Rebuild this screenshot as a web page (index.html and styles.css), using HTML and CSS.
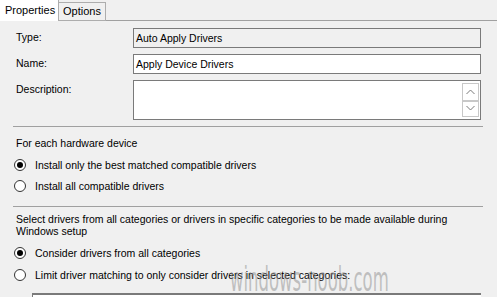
FILE: index.html
```html
<!DOCTYPE html>
<html>
<head>
<meta charset="utf-8">
<link rel="stylesheet" href="styles.css">
</head>
<body>
<div class="dialog">
  <div class="tabbar">
    <div class="tab active">Properties</div>
    <div class="tab">Options</div>
    <div class="tab-fill"></div>
  </div>
  <div class="panel">
    <div class="form">
      <div class="label">Type:</div>
      <div class="field readonly">Auto Apply Drivers</div>
      <div class="label">Name:</div>
      <div class="field">Apply Device Drivers</div>
      <div class="label">Description:</div>
      <div class="textarea">
        <div class="textarea-body"></div>
        <div class="spin">
          <div class="spin-btn">
            <svg width="9" height="6" viewBox="0 0 9 6"><path d="M0.5 5 L4.5 1 L8.5 5" fill="none" stroke="#7a7a7a" stroke-width="1"/></svg>
          </div>
          <div class="spin-btn">
            <svg width="9" height="6" viewBox="0 0 9 6"><path d="M0.5 1 L4.5 5 L8.5 1" fill="none" stroke="#7a7a7a" stroke-width="1"/></svg>
          </div>
        </div>
      </div>
    </div>
    <div class="sep"></div>
    <div class="section s1">
      <div class="caption">For each hardware device</div>
      <div class="radio-row first"><span class="radio checked"></span><span>Install only the best matched compatible drivers</span></div>
      <div class="radio-row second"><span class="radio"></span><span>Install all compatible drivers</span></div>
    </div>
    <div class="sep sep2"></div>
    <div class="section s2">
      <div class="caption multi">Select drivers from all categories or drivers in specific categories to be made available during Windows setup</div>
      <div class="radio-row first2"><span class="radio checked"></span><span>Consider drivers from all categories</span></div>
      <div class="radio-row second2"><span class="radio"></span><span>Limit driver matching to only consider drivers in selected categories:</span></div>
      <div class="listbox"></div>
    </div>
  </div>
  <div class="watermark">windows-noob.com</div>
</div>
</body>
</html>
```

FILE: styles.css
```css
html, body {
  margin: 0;
  padding: 0;
}
body {
  width: 497px;
  height: 297px;
  overflow: hidden;
  background: #f0f0f0;
  font-family: "Liberation Sans", Arial, sans-serif;
  font-size: 10.5px;
  color: #000;
}
.dialog {
  position: relative;
  width: 497px;
  height: 297px;
  overflow: hidden;
}
.tabbar {
  display: flex;
  height: 21px;
}
.tab {
  box-sizing: border-box;
  height: 19px;
  margin-top: 2px;
  padding: 0 4px;
  line-height: 17px;
  font-size: 11px;
  background: #f0f0f0;
  border: 1px solid #adadad;
  border-left: none;
}
.tab.active {
  height: 21px;
  margin-top: 0;
  width: 59px;
  padding: 0 0 0 5px;
  line-height: 20px;
  background: #fff;
  border: none;
  border-right: 1px solid #adadad;
}
.tab-fill {
  flex: 1;
  border-bottom: 1px solid #a0a0a0;
  height: 20px;
}
.panel {
  padding: 7px 16px 0 16px;
}
.form {
  display: grid;
  grid-template-columns: 117px 1fr;
  row-gap: 6px;
}
.label {
  line-height: 14px;
  padding-top: 2px;
}
.field {
  box-sizing: border-box;
  height: 20px;
  border: 1px solid #7a7a7a;
  background: #fff;
  padding-left: 2px;
  line-height: 18px;
}
.field.readonly {
  background: #f0f0f0;
}
.textarea {
  box-sizing: border-box;
  height: 40px;
  border: 1px solid #7a7a7a;
  background: #fff;
  display: flex;
  padding: 2px 1px 2px 0;
}
.textarea-body {
  flex: 1;
}
.spin {
  width: 17px;
  display: flex;
  flex-direction: column;
}
.spin-btn {
  box-sizing: border-box;
  flex: 1;
  border: 1px solid #c8c8c8;
  display: flex;
  align-items: center;
  justify-content: center;
}
.spin-btn + .spin-btn {
  border-top: none;
  box-shadow: inset 0 1px 0 #c8c8c8;
}
.sep {
  height: 1px;
  background: #a0a0a0;
  margin: 6px -2px 0 -3px;
}
.sep2 {
  margin-top: 10px;
}
.caption {
  line-height: 14px;
  margin-top: 9px;
}
.caption.multi {
  line-height: 12px;
  margin-top: 6px;
  padding-right: 10px;
}
.radio-row {
  display: flex;
  align-items: center;
  height: 20px;
  gap: 9px;
}
.radio-row.first { margin-top: 5px; }
.radio-row.second { margin-top: 1px; }
.radio-row.first2 { margin-top: 6px; }
.radio-row.second2 { margin-top: 2px; }
.radio {
  box-sizing: border-box;
  width: 12px;
  height: 12px;
  border: 1px solid #333;
  border-radius: 50%;
  background: #fff;
  display: flex;
  align-items: center;
  justify-content: center;
  margin-left: -2px;
}
.radio.checked::after {
  content: "";
  width: 6px;
  height: 6px;
  border-radius: 50%;
  background: #000;
}
.listbox {
  margin: 8px 0 0 16px;
  height: 20px;
  border-top: 2px solid #7a7a7a;
  border-left: 1px solid #7a7a7a;
  background: #fff;
}
.watermark {
  position: absolute;
  left: 230px;
  top: 260px;
  font-family: "DejaVu Sans", sans-serif;
  font-size: 33px;
  color: rgba(140, 140, 140, 0.5);
  transform-origin: left top;
  transform: scaleX(0.5);
  white-space: nowrap;
}
```
